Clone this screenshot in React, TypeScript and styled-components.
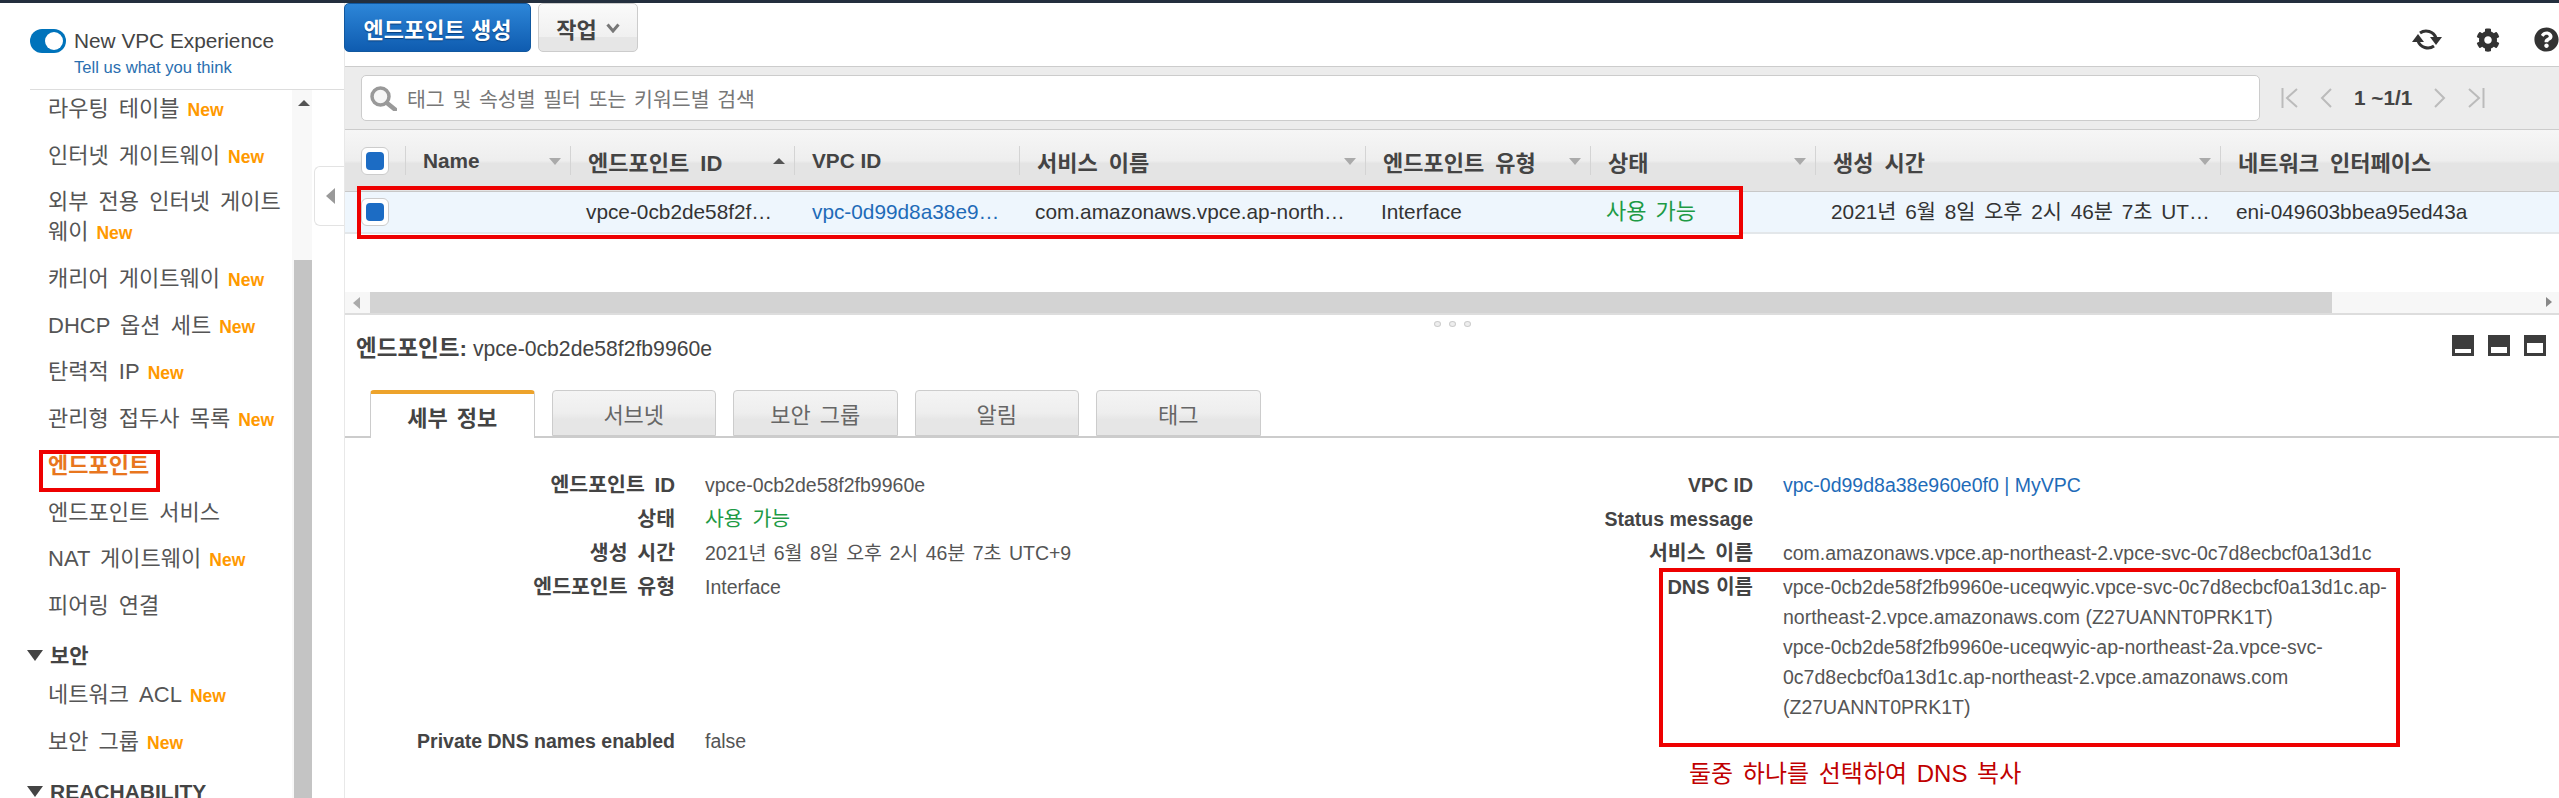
import React, { FC } from 'react'
import styled, { createGlobalStyle } from 'styled-components'
import { FaCog, FaQuestionCircle } from 'react-icons/fa'

const FONT = `"Liberation Sans", "Noto Sans CJK KR", sans-serif`

const GlobalStyle = createGlobalStyle`
	html, body {
		margin: 0;
		padding: 0;
		background: #fff;
		overflow: hidden;
	}
	* {
		box-sizing: border-box;
	}
`

interface MenuItem {
	label: string
	isNew?: boolean
	active?: boolean
	heading?: boolean
}

const menu: MenuItem[] = [
	{ label: '라우팅 테이블', isNew: true },
	{ label: '인터넷 게이트웨이', isNew: true },
	{ label: '외부 전용 인터넷 게이트웨이', isNew: true },
	{ label: '캐리어 게이트웨이', isNew: true },
	{ label: 'DHCP 옵션 세트', isNew: true },
	{ label: '탄력적 IP', isNew: true },
	{ label: '관리형 접두사 목록', isNew: true },
	{ label: '엔드포인트', active: true },
	{ label: '엔드포인트 서비스' },
	{ label: 'NAT 게이트웨이', isNew: true },
	{ label: '피어링 연결' },
	{ label: '보안', heading: true },
	{ label: '네트워크 ACL', isNew: true },
	{ label: '보안 그룹', isNew: true },
	{ label: 'REACHABILITY', heading: true },
]

const columns = [
	{ title: '', width: 61 },
	{ title: 'Name', width: 165, sort: 'down' },
	{ title: '엔드포인트 ID', width: 224, sort: 'up', ko: true },
	{ title: 'VPC ID', width: 225 },
	{ title: '서비스 이름', width: 346, sort: 'down', ko: true },
	{ title: '엔드포인트 유형', width: 225, sort: 'down', ko: true },
	{ title: '상태', width: 225, sort: 'down', ko: true },
	{ title: '생성 시간', width: 405, sort: 'down', ko: true },
	{ title: '네트워크 인터페이스', width: 339, ko: true },
]

const tabs = ['세부 정보', '서브넷', '보안 그룹', '알림', '태그']

const App: FC = () => (
	<Page>
		<GlobalStyle />
		<TopStrip />
		<Body>
			<Sidebar>
				<ToggleBlock>
					<ToggleRow>
						<Toggle />
						<ToggleLabel>New VPC Experience</ToggleLabel>
					</ToggleRow>
					<Feedback>Tell us what you think</Feedback>
				</ToggleBlock>
				<SidebarBody>
					<MenuList>
						{menu.map(item =>
							item.heading ? (
								<GroupHeading key={item.label}>
									<GroupArrow />
									{item.label}
								</GroupHeading>
							) : (
								<MenuRow key={item.label} $active={item.active}>
									{item.label}
									{item.isNew && <NewBadge>New</NewBadge>}
								</MenuRow>
							),
						)}
					</MenuList>
					<MenuScroll>
						<MenuScrollUp />
						<MenuScrollThumb />
					</MenuScroll>
					<CollapseHandle>
						<CollapseArrow />
					</CollapseHandle>
				</SidebarBody>
			</Sidebar>

			<Main>
				<Toolbar>
					<PrimaryButton>엔드포인트 생성</PrimaryButton>
					<ActionButton>
						작업
						<svg width="14" height="10" viewBox="0 0 14 10">
							<path d="M1.5 1.5 L7 8 L12.5 1.5" fill="none" stroke="#777" strokeWidth="3" />
						</svg>
					</ActionButton>
					<ToolbarIcons>
						<svg width="30" height="25" viewBox="0 0 30 25">
							<path d="M8 6 A10.5 10.5 0 0 1 24 11" fill="none" stroke="#333" strokeWidth="3" />
							<path d="M22 19 A10.5 10.5 0 0 1 6 14" fill="none" stroke="#333" strokeWidth="3" />
							<path d="M18 10 L30 10 L24 18 Z M0 15 L12 15 L6 7 Z" fill="#333" />
						</svg>
						<FaCog size={24} color="#333" />
						<FaQuestionCircle size={25} color="#333" />
					</ToolbarIcons>
				</Toolbar>

				<SearchBand>
					<SearchBox>
						<svg width="27" height="25" viewBox="0 0 27 25">
							<circle cx="10.5" cy="10.5" r="8.5" fill="#f6f6f6" stroke="#999" strokeWidth="3.5" />
							<path d="M17 17 L25 23.5" stroke="#999" strokeWidth="4.5" strokeLinecap="round" />
						</svg>
						<SearchHint>태그 및 속성별 필터 또는 키워드별 검색</SearchHint>
					</SearchBox>
					<Pager>
						<svg width="17" height="20" viewBox="0 0 17 20">
							<path d="M1.5 0 V20 M16 1 L6 10 L16 19" fill="none" stroke="#bbb" strokeWidth="2" />
						</svg>
						<svg width="12" height="20" viewBox="0 0 12 20">
							<path d="M11 1 L2 10 L11 19" fill="none" stroke="#bbb" strokeWidth="2" />
						</svg>
						<PagerText>1 ~1/1</PagerText>
						<svg width="12" height="20" viewBox="0 0 12 20">
							<path d="M1 1 L10 10 L1 19" fill="none" stroke="#bbb" strokeWidth="2" />
						</svg>
						<svg width="17" height="20" viewBox="0 0 17 20">
							<path d="M15.5 0 V20 M1 1 L11 10 L1 19" fill="none" stroke="#bbb" strokeWidth="2" />
						</svg>
					</Pager>
				</SearchBand>

				<TableHead>
					{columns.map((col, index) => (
						<HeadCell key={index} $width={col.width} $first={index === 0}>
							{index === 0 ? <CheckBox /> : <HeadTitle $ko={col.ko}>{col.title}</HeadTitle>}
							{col.sort && <SortArrow $up={col.sort === 'up'} />}
						</HeadCell>
					))}
				</TableHead>
				<TableRow>
					<RowCell $width={61} $first>
						<CheckBox />
					</RowCell>
					<RowCell $width={165} />
					<RowCell $width={224} $pad={17}>vpce-0cb2de58f2fb9960e</RowCell>
					<RowCell $width={225} $pad={18} $left={17} $link>vpc-0d99d8a38e960e0f0</RowCell>
					<RowCell $width={346}>com.amazonaws.vpce.ap-northeast-2.vpce-svc-0c7d8ecbcf0a13d1c</RowCell>
					<RowCell $width={225}>Interface</RowCell>
					<RowCell $width={225} $ok $ko>사용 가능</RowCell>
					<RowCell $width={405} $pad={10} $date>2021년 6월 8일 오후 2시 46분 7초 UTC+9</RowCell>
					<RowCell $width={339}>eni-049603bbea95ed43a</RowCell>
				</TableRow>
				<TableSpace />
				<HScroll>
					<HScrollLeft />
					<HScrollThumb />
					<HScrollRight />
				</HScroll>
				<ResizeDots>
					<Dot />
					<Dot />
					<Dot />
				</ResizeDots>

				<DetailHead>
					<DetailTitle>
						<strong>엔드포인트:</strong> vpce-0cb2de58f2fb9960e
					</DetailTitle>
					<PanelIcons>
						<PanelIcon $open={4} />
						<PanelIcon $open={6} />
						<PanelIcon $open={10} />
					</PanelIcons>
				</DetailHead>

				<TabBar>
					{tabs.map((tab, index) => (
						<Tab key={tab} $active={index === 0}>
							{tab}
						</Tab>
					))}
				</TabBar>

				<DetailGrid>
					<Label $ko>엔드포인트 ID</Label>
					<Value>vpce-0cb2de58f2fb9960e</Value>
					<Label>VPC ID</Label>
					<Value $link>vpc-0d99d8a38e960e0f0 | MyVPC</Value>

					<Label $ko>상태</Label>
					<Value $ok $ko>사용 가능</Value>
					<Label>Status message</Label>
					<Value />

					<Label $ko>생성 시간</Label>
					<Value $date>2021년 6월 8일 오후 2시 46분 7초 UTC+9</Value>
					<Label $ko>서비스 이름</Label>
					<Value>com.amazonaws.vpce.ap-northeast-2.vpce-svc-0c7d8ecbcf0a13d1c</Value>

					<Label $ko>엔드포인트 유형</Label>
					<Value>Interface</Value>
					<DnsLabel>DNS 이름</DnsLabel>
					<Value>
						<div>vpce-0cb2de58f2fb9960e-uceqwyic.vpce-svc-0c7d8ecbcf0a13d1c.ap-northeast-2.vpce.amazonaws.com (Z27UANNT0PRK1T)</div>
						<div>vpce-0cb2de58f2fb9960e-uceqwyic-ap-northeast-2a.vpce-svc-0c7d8ecbcf0a13d1c.ap-northeast-2.vpce.amazonaws.com (Z27UANNT0PRK1T)</div>
					</Value>

					<Label>Private DNS names enabled</Label>
					<Value>false</Value>
				</DetailGrid>
			</Main>
		</Body>

		<RedBox $x={39} $y={450} $w={121} $h={42} />
		<RedBox $x={357} $y={186} $w={1386} $h={53} />
		<RedBox $x={1659} $y={568} $w={741} $h={179} />
		<RedNote>둘중 하나를 선택하여 DNS 복사</RedNote>
	</Page>
)

export default App

const Page = styled.div`
	position: relative;
	width: 2559px;
	height: 798px;
	overflow: hidden;
	font-family: ${FONT};
	font-size: 20.8px;
	color: #444;
`

const TopStrip = styled.div`
	height: 3px;
	background: #232f3e;
`

const Body = styled.div`
	display: flex;
	height: 795px;
`

const Sidebar = styled.aside`
	flex: 0 0 344px;
	display: flex;
	flex-direction: column;
	padding-left: 30px;
`

const ToggleBlock = styled.div`
	height: 87px;
	padding-top: 26px;
	border-bottom: 1px solid #ddd;
`

const ToggleRow = styled.div`
	display: flex;
	align-items: center;
	gap: 8px;
`

const Toggle = styled.span`
	position: relative;
	width: 36px;
	height: 24px;
	border-radius: 12px;
	background: #0073bb;

	&::after {
		content: '';
		position: absolute;
		right: 3px;
		top: 3px;
		width: 18px;
		height: 18px;
		border-radius: 50%;
		background: #fff;
	}
`

const ToggleLabel = styled.span`
	font-size: 20.8px;
	line-height: 24px;
	color: #444;
`

const Feedback = styled.div`
	margin: 5px 0 0 44px;
	font-size: 16.6px;
	line-height: 20px;
	color: #2a6fb0;
`

const SidebarBody = styled.div`
	position: relative;
	flex: 1;
	display: flex;
	overflow: hidden;
	margin-left: -30px;
`

const MenuList = styled.div`
	flex: 0 0 292px;
	padding: 4px 0 0 48px;
	display: flex;
	flex-direction: column;
	gap: 16.7px;
`

const MenuRow = styled.div<{ $active?: boolean }>`
	line-height: 30px;
	font-size: 22px;
	word-spacing: 4px;
	color: ${p => (p.$active ? '#e8761e' : '#555')};
	font-weight: ${p => (p.$active ? 700 : 400)};
`

const NewBadge = styled.span`
	margin-left: 8px;
	font-size: 17.5px;
	line-height: 1;
	font-weight: 700;
	color: #f90;
`

const GroupHeading = styled.div`
	position: relative;
	margin: 3px 0 -7px;
	padding-left: 2px;
	line-height: 30px;
	font-size: 21px;
	font-weight: 700;
	color: #444;
`

const GroupArrow = styled.span`
	position: absolute;
	left: -21px;
	top: 9px;
	border-left: 8px solid transparent;
	border-right: 8px solid transparent;
	border-top: 11px solid #444;
`

const MenuScroll = styled.div`
	position: relative;
	flex: 0 0 20px;
	background: #f8f8f8;
`

const MenuScrollUp = styled.span`
	position: absolute;
	left: 6px;
	top: 10px;
	border-left: 6px solid transparent;
	border-right: 6px solid transparent;
	border-bottom: 6px solid #555;
`

const MenuScrollThumb = styled.div`
	position: absolute;
	left: 2px;
	right: 0;
	top: 170px;
	bottom: 0;
	background: #c4c4c4;
`

const CollapseHandle = styled.div`
	position: absolute;
	right: 0;
	top: 76px;
	width: 30px;
	height: 60px;
	display: flex;
	align-items: center;
	padding-left: 11px;
	background: #fff;
	border: 1px solid #e3e3e3;
	border-right: 0;
	border-radius: 6px 0 0 6px;
`

const CollapseArrow = styled.span`
	border-top: 8px solid transparent;
	border-bottom: 8px solid transparent;
	border-right: 9px solid #999;
`

const Main = styled.main`
	flex: 1;
	min-width: 0;
	display: flex;
	flex-direction: column;
	border-left: 1px solid #e8e8e8;
`

const Toolbar = styled.div`
	height: 63px;
	display: flex;
	align-items: flex-start;
	gap: 7px;
	flex: none;
`

const PrimaryButton = styled.button`
	width: 187px;
	height: 49px;
	margin-left: -1px;
	padding: 0;
	border: 1px solid #11589f;
	border-radius: 5px;
	background: linear-gradient(#2d86d8, #0f5cb0);
	color: #fff;
	font-family: ${FONT};
	font-size: 22px;
	font-weight: 700;
	text-shadow: 0 1px 1px #0a3f7c;
`

const ActionButton = styled.button`
	width: 100px;
	height: 49px;
	display: flex;
	align-items: center;
	justify-content: center;
	gap: 9px;
	padding: 0;
	border: 1px solid #ccc;
	border-radius: 5px;
	background: linear-gradient(#fafafa 0, #f0f0f0 70%, #e6e6e6 71%, #e6e6e6);
	color: #444;
	font-family: ${FONT};
	font-size: 22px;
	font-weight: 700;
`

const ToolbarIcons = styled.div`
	margin-left: auto;
	padding-top: 24px;
	display: flex;
	align-items: center;
	gap: 34px;
`

const SearchBand = styled.div`
	height: 64px;
	flex: none;
	display: flex;
	align-items: center;
	padding-left: 16px;
	background: #ececec;
	border-top: 1px solid #ccc;
	border-bottom: 1px solid #ccc;
`

const SearchBox = styled.div`
	width: 1899px;
	height: 46px;
	display: flex;
	align-items: center;
	gap: 10px;
	padding-left: 8px;
	background: #fff;
	border: 1px solid #ccc;
	border-radius: 5px;
`

const SearchHint = styled.span`
	font-size: 20.5px;
	word-spacing: 2px;
	color: #777;
`

const Pager = styled.div`
	margin-left: 21px;
	display: flex;
	align-items: center;
	gap: 22px;
`

const PagerText = styled.span`
	font-size: 20.8px;
	font-weight: 700;
	color: #444;
`

const TableHead = styled.div`
	display: flex;
	flex: none;
	height: 62px;
	background: linear-gradient(#f6f6f6, #eeeeee 50%, #e4e4e4 55%, #e4e4e4);
	border-bottom: 1px solid #c8c8c8;
`

const HeadCell = styled.div<{ $width: number; $first?: boolean }>`
	position: relative;
	flex: 0 0 ${p => p.$width}px;
	display: flex;
	align-items: center;
	padding-left: ${p => (p.$first ? 16 : 17)}px;

	&::after {
		content: '';
		position: absolute;
		right: 0;
		top: 16px;
		bottom: 16px;
		width: 1px;
		background: #d4d4d4;
		display: ${p => (p.$width === 339 ? 'none' : 'block')};
	}
`

const HeadTitle = styled.span<{ $ko?: boolean }>`
	font-size: ${p => (p.$ko ? 22 : 20.8)}px;
	word-spacing: ${p => (p.$ko ? 5 : 0)}px;
	font-weight: 700;
	color: #444;
	white-space: nowrap;
`

const SortArrow = styled.span<{ $up?: boolean }>`
	position: absolute;
	right: 10px;
	top: 28px;
	border-left: 6px solid transparent;
	border-right: 6px solid transparent;
	${p => (p.$up ? 'border-bottom: 6px solid #555;' : 'border-top: 7px solid #aaa;')}
`

const CheckBox = styled.span`
	display: block;
	width: 28px;
	height: 28px;
	padding: 4px;
	background: #fff;
	border: 1px solid #ccc;
	border-radius: 6px;

	&::before {
		content: '';
		display: block;
		width: 100%;
		height: 100%;
		border-radius: 4px;
		background: #1c6cc4;
	}
`

const TableRow = styled.div`
	display: flex;
	flex: none;
	height: 42px;
	background: #eef6fd;
	border-bottom: 2px solid #e3e7ea;
`

const RowCell = styled.div<{
	$width: number
	$first?: boolean
	$link?: boolean
	$ok?: boolean
	$ko?: boolean
	$date?: boolean
	$pad?: number
	$left?: number
}>`
	flex: 0 0 ${p => p.$width}px;
	display: block;
	padding: ${p => (p.$first ? '6px 0 0 16px' : `0 ${p.$pad ?? 11}px 0 ${p.$left ?? 15}px`)};
	color: ${p => (p.$link ? '#1e6bb8' : p.$ok ? '#1d9a45' : '#333')};
	font-size: ${p => (p.$ko ? 22 : 20.8)}px;
	word-spacing: ${p => (p.$ko ? 3 : p.$date ? 3 : 0)}px;
	line-height: 40px;
	overflow: hidden;
	white-space: nowrap;
	text-overflow: ellipsis;
`

const TableSpace = styled.div`
	height: 58px;
	flex: none;
`

const HScroll = styled.div`
	position: relative;
	flex: none;
	height: 23px;
	display: flex;
	background: #f7f7f7;
	border-bottom: 2px solid #ddd;
`

const HScrollLeft = styled.span`
	width: 25px;

	&::before {
		content: '';
		position: absolute;
		left: 8px;
		top: 5px;
		border-top: 6px solid transparent;
		border-bottom: 6px solid transparent;
		border-right: 7px solid #aaa;
	}
`

const HScrollThumb = styled.div`
	width: 1962px;
	height: 21px;
	background: #d3d3d3;
`

const HScrollRight = styled.span`
	position: absolute;
	right: 7px;
	top: 5px;
	border-top: 5px solid transparent;
	border-bottom: 5px solid transparent;
	border-left: 6px solid #888;
`

const ResizeDots = styled.div`
	flex: none;
	display: flex;
	justify-content: center;
	gap: 8px;
	height: 12px;
	padding-top: 6px;
`

const Dot = styled.span`
	width: 7px;
	height: 6px;
	border-radius: 50%;
	background: #eee;
	border: 1px solid #ccc;
`

const DetailHead = styled.div`
	flex: none;
	height: 63px;
	display: flex;
	justify-content: space-between;
	align-items: center;
	padding: 0 13px 26px 11px;
`

const DetailTitle = styled.div`
	font-size: 21.2px;
	color: #444;

	strong {
		font-size: 22.5px;
		font-weight: 700;
	}
`

const PanelIcons = styled.div`
	display: flex;
	gap: 14px;
`

const PanelIcon = styled.span<{ $open: number }>`
	position: relative;
	width: 22px;
	height: 21px;
	background: #3c3c3c;

	&::after {
		content: '';
		position: absolute;
		left: 3px;
		right: 3px;
		bottom: 3px;
		height: ${p => p.$open}px;
		background: #fff;
	}
`

const TabBar = styled.div`
	flex: none;
	height: 48px;
	display: flex;
	gap: 17px;
	padding-left: 25px;
	border-bottom: 2px solid #ccc;
`

const Tab = styled.div<{ $active?: boolean }>`
	width: 164.5px;
	height: ${p => (p.$active ? 48 : 46)}px;
	display: flex;
	align-items: center;
	justify-content: center;
	border: 1px solid #ccc;
	border-bottom: ${p => (p.$active ? '0' : '1px solid #ccc')};
	border-top: ${p => (p.$active ? '4px solid #eda32b' : '1px solid #ccc')};
	border-radius: 4px 4px 0 0;
	background: ${p => (p.$active ? '#fff' : 'linear-gradient(#f4f4f4, #eeeeee 50%, #e6e6e6 65%, #e6e6e6)')};
	color: ${p => (p.$active ? '#444' : '#666')};
	font-size: 22px;
	word-spacing: 3px;
	font-weight: ${p => (p.$active ? 700 : 400)};
`

const DetailGrid = styled.div`
	display: grid;
	grid-template-columns: 330px 730px 348px 642px;
	grid-auto-rows: min-content;
	row-gap: 4px;
	padding-top: 32px;
	font-size: 19.5px;
	line-height: 30px;
`

const Label = styled.div<{ $ko?: boolean }>`
	text-align: right;
	font-size: ${p => (p.$ko ? 20.5 : 19.5)}px;
	word-spacing: ${p => (p.$ko ? 4 : 0)}px;
	font-weight: 700;
	color: #444;
	white-space: nowrap;
`

const DnsLabel = styled(Label)`
	font-size: 20px;
	word-spacing: 1px;
`

const Value = styled.div<{ $link?: boolean; $ok?: boolean; $ko?: boolean; $date?: boolean }>`
	padding-left: 30px;
	font-size: ${p => (p.$ko ? 20.5 : 19.5)}px;
	word-spacing: ${p => (p.$ko ? 4 : p.$date ? 2 : 0)}px;
	color: ${p => (p.$link ? '#1e6bb8' : p.$ok ? '#1d9a45' : '#555')};
`

const RedBox = styled.div<{ $x: number; $y: number; $w: number; $h: number }>`
	position: absolute;
	left: ${p => p.$x}px;
	top: ${p => p.$y}px;
	width: ${p => p.$w}px;
	height: ${p => p.$h}px;
	border: 4px solid #ee0000;
	pointer-events: none;
`

const RedNote = styled.div`
	position: absolute;
	left: 1689px;
	top: 760px;
	line-height: 28px;
	font-size: 24px;
	word-spacing: 3px;
	color: #c00000;
`
